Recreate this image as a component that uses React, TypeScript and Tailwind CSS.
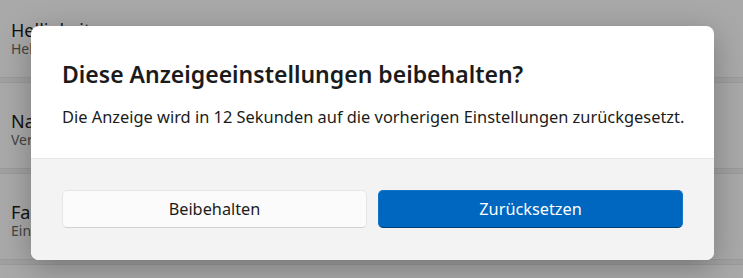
import React from "react";

const rows = [
  { title: "Helligkeit", sub: "Helligkeit der integrierten Anzeige anpassen" },
  { title: "Nachtmodus", sub: "Verwenden Sie wärmere Farben, um blaues Licht zu blockieren" },
  { title: "Farbprofil", sub: "Ein Farbprofil für die Anzeige auswählen" },
  { title: "HDR", sub: "Weitere Informationen zu HDR" },
];

export default function App() {
  return (
    <div
      className="relative w-[743px] h-[278px] overflow-hidden bg-[#f0f0f0]"
      style={{ fontFamily: "'Noto Sans', 'Open Sans', sans-serif" }}
    >
      {/* settings page behind the dialog */}
      <div className="flex flex-col gap-[4px] -mt-[9px]">
        {rows.map((r) => (
          <div
            key={r.title}
            className="h-[87px] shrink-0 bg-[#fdfdfd] border-y border-[#e6e6e6] px-[11px] pt-[28px]"
          >
            <div className="text-[18px] leading-[20px] text-[#1b1b1b] whitespace-nowrap">{r.title}</div>
            <div className="text-[14px] leading-[17px] text-[#666] whitespace-nowrap">{r.sub}</div>
          </div>
        ))}
      </div>

      {/* dim layer */}
      <div className="absolute inset-0 bg-black/[0.33]" />

      {/* dialog */}
      <div className="absolute left-[31px] top-[26px] w-[683px] h-[234px] rounded-[8px] overflow-hidden bg-white shadow-[0_8px_32px_rgba(0,0,0,0.28)] flex flex-col">
        <div className="h-[133px] px-[31px] pt-[33px] border-b border-[#e5e5e5]">
          <h1 className="text-[23px] leading-[30px] font-semibold text-[#1b1b1b]">
            Diese Anzeigeeinstellungen beibehalten?
          </h1>
          <p className="mt-[17px] text-[16.4px] leading-[22px] text-[#1b1b1b] whitespace-nowrap">
            Die Anzeige wird in 12 Sekunden auf die vorherigen Einstellungen zurückgesetzt.
          </p>
        </div>
        <div className="flex-1 bg-[#f3f3f3] px-[31px] pt-[31px] flex gap-[11px]">
          <button className="h-[38px] flex-1 rounded-[5px] bg-[#fbfbfb] border border-[#e5e5e5] border-b-[#d0d0d0] text-[16.3px] text-[#1b1b1b]">
            Beibehalten
          </button>
          <button className="h-[38px] flex-1 rounded-[5px] bg-[#0067c0] border border-[#1473c5] border-b-[#003e73] text-[16.3px] text-white">
            Zurücksetzen
          </button>
        </div>
      </div>
    </div>
  );
}
